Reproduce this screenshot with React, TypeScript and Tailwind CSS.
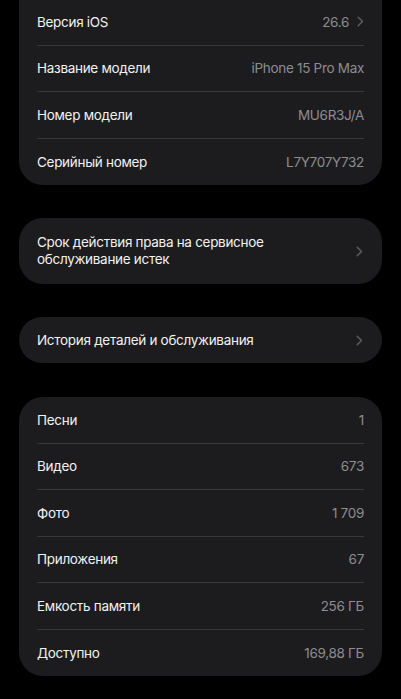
import React from "react";

const Chevron = () => (
  <svg width="7" height="11" viewBox="0 0 7 11" fill="none" className="shrink-0">
    <path d="M1.2 1.2L5.5 5.5L1.2 9.8" stroke="#5c5c60" strokeWidth="1.5" strokeLinecap="round" strokeLinejoin="round" />
  </svg>
);

type Row = { label: string; value: string; chevron?: boolean };

const Card = ({ rows, className = "" }: { rows: Row[]; className?: string }) => (
  <div className={`mx-[19px] rounded-[24px] bg-[#1c1c1e] ${className}`}>
    {rows.map((r, i) => (
      <div key={r.label} className="px-[18px]">
        <div className={`flex h-[46.5px] items-center justify-between ${i < rows.length - 1 ? "border-b border-[#38383a]" : ""}`}>
          <span className="text-[13.5px] tracking-[-0.3px] text-[#f2f2f2]">{r.label}</span>
          <span className="flex items-center gap-[8px] text-[13.5px] tracking-[-0.3px] text-[#8d8d92]">
            {r.value}
            {r.chevron && <Chevron />}
          </span>
        </div>
      </div>
    ))}
  </div>
);

export default function App() {
  return (
    <div className="min-h-[699px] bg-black pb-8" style={{ fontFamily: "Inter, 'Noto Sans', sans-serif" }}>
      <Card
        className="mt-[-1px] rounded-t-none"
        rows={[
          { label: "Версия iOS", value: "26.6", chevron: true },
          { label: "Название модели", value: "iPhone 15 Pro Max" },
          { label: "Номер модели", value: "MU6R3J/A" },
          { label: "Серийный номер", value: "L7Y707Y732" },
        ]}
      />
      <div className="mx-[19px] mt-[33px] flex h-[66px] items-center justify-between rounded-[24px] bg-[#1c1c1e] pl-[18px] pr-[19px]">
        <span className="text-[13.5px] leading-[17px] tracking-[-0.3px] text-[#f2f2f2]">
          Срок действия права на сервисное
          <br />
          обслуживание истек
        </span>
        <Chevron />
      </div>
      <div className="mx-[19px] mt-[33px] flex h-[46px] items-center justify-between rounded-[24px] bg-[#1c1c1e] pl-[18px] pr-[19px]">
        <span className="text-[13.5px] tracking-[-0.3px] text-[#f2f2f2]">История деталей и обслуживания</span>
        <Chevron />
      </div>
      <Card
        className="mt-[34px]"
        rows={[
          { label: "Песни", value: "1" },
          { label: "Видео", value: "673" },
          { label: "Фото", value: "1 709" },
          { label: "Приложения", value: "67" },
          { label: "Емкость памяти", value: "256 ГБ" },
          { label: "Доступно", value: "169,88 ГБ" },
        ]}
      />
    </div>
  );
}
